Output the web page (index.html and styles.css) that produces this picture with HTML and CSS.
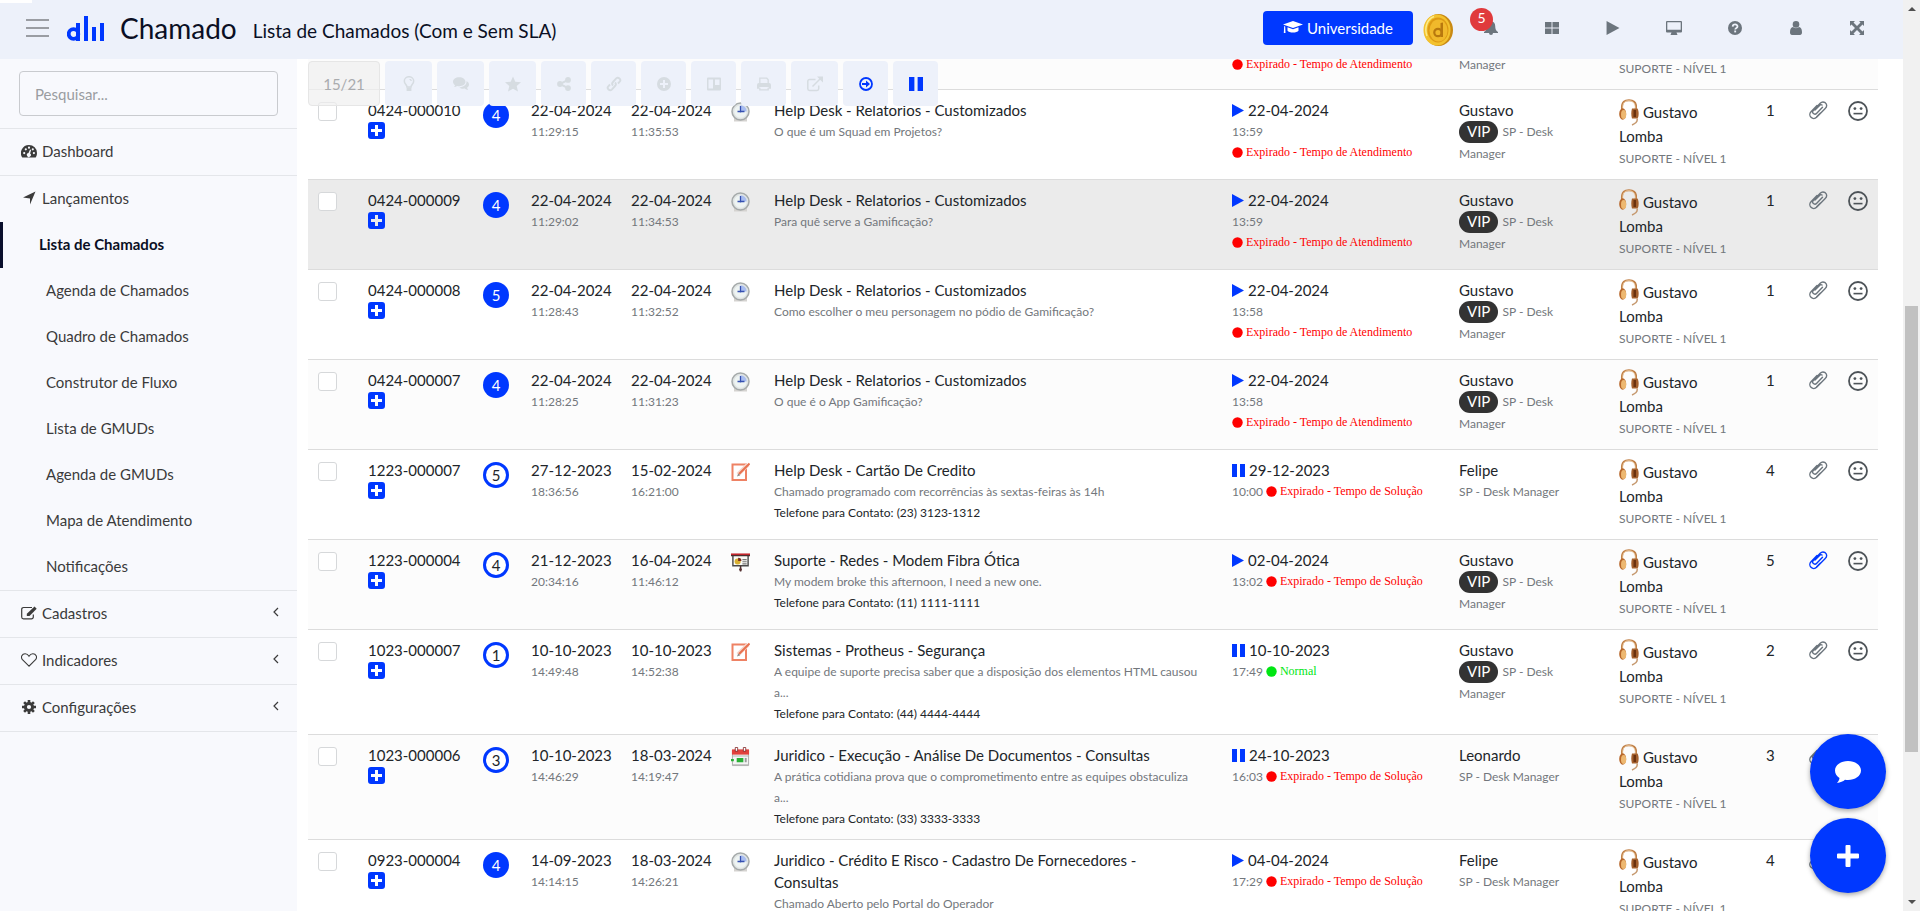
FILE: index.html
```html
<!DOCTYPE html>
<html lang="pt-BR">
<head>
<meta charset="utf-8">
<title>Chamado - Lista de Chamados</title>
<link rel="stylesheet" href="styles.css">
</head>
<body>
<svg class="sprite" aria-hidden="true">
  <symbol id="i-play" viewBox="0 0 12 13"><path d="M0 0L12 6.5L0 13Z"/></symbol>
  <symbol id="i-pause" viewBox="0 0 13 13"><path d="M0 0h5v13H0zM8 0h5v13H8z"/></symbol>
  <symbol id="i-dot" viewBox="0 0 11 11"><circle cx="5.5" cy="5.5" r="5.2"/></symbol>
  <symbol id="i-plus-square" viewBox="0 0 17 17"><path fill-rule="evenodd" d="M3 0h11a3 3 0 0 1 3 3v11a3 3 0 0 1-3 3H3a3 3 0 0 1-3-3V3a3 3 0 0 1 3-3zM7 3v4H3v3h4v4h3v-4h4V7h-4V3z"/></symbol>
  <symbol id="i-clip" viewBox="0 0 20 20"><path fill="none" stroke="currentColor" stroke-width="1.4" stroke-linecap="round" d="M9 5.500L3 11.700a3.900 3.900 0 0 0 5.600 5.600L17.200 8.500a3.600 3.600 0 0 0 0-5.800a3.900 3.900 0 0 0-5 .6L5.300 10.400a2.200 2.200 0 0 0 3.200 3.100L14.500 7.200M12.200 13.200L8.700 16.800M14 5a1.500 1.500 0 0 0-2.200.2L7 10"/></symbol>
  <symbol id="i-face" viewBox="0 0 20 20"><circle cx="10" cy="10" r="9" fill="none" stroke="currentColor" stroke-width="1.800"/><circle cx="6.900" cy="7.600" r="1.400"/><circle cx="13.100" cy="7.600" r="1.400"/><path d="M5.500 11.800h9v1.600h-9z"/></symbol>
  <symbol id="i-clock" viewBox="0 0 19 20"><path fill="#d5d3d0" d="M3 16h13v3.500H3z"/><circle cx="9.500" cy="9.500" r="8.500" fill="#dfe3e3" stroke="#a5aaaa" stroke-width="1.500"/><circle cx="9.500" cy="9.500" r="6.300" fill="#eef4f3"/><path fill="#a8bdf0" d="M9.500 3.200a6.300 6.300 0 0 1 6.300 6.300H9.500z"/><path fill="none" stroke="#3550b0" stroke-width="1.300" d="M9.500 4v6.500M6.500 9.500h7"/></symbol>
  <symbol id="i-note" viewBox="0 0 19 19"><path fill="#fff" stroke="#ee8264" stroke-width="2" d="M1.500 2h13.500v15.500H1.500z"/><path stroke="#f7d5ca" stroke-width="4" d="M7 12L17 2"/><path stroke="#e8714f" stroke-width="2" d="M8 11.500L18.500 1"/><path fill="#888" d="M6 14l1.200-3 2 1.800z"/></symbol>
  <symbol id="i-board" viewBox="0 0 20 20"><path fill="#fafaf6" stroke="#4a4a4a" stroke-width="1.500" d="M2 3h16v11H2z"/><path fill="#c4262d" d="M0 1h20v2H0z"/><path fill="#4a3030" d="M0 2.500h20v1.500H0zM9.300 14h1.600v6H9.300z"/><circle cx="7" cy="9.500" r="3.200" fill="#d8b032"/><path fill="#7a2b22" d="M7.500 9V5.500A3.500 3.500 0 0 1 11 9z"/><path stroke="#777" stroke-width="1.200" d="M12 7.500h4.500M12 9.700h4.500M12 12h4.500"/><circle cx="10" cy="18" r="1.500" fill="#5a3030"/></symbol>
  <symbol id="i-calendar" viewBox="0 0 20 20"><path fill="#f4f4f4" stroke="#aaa" d="M1.500 3h17v16h-17z"/><path fill="#e2403c" d="M1 2h18v5.500H1z"/><path fill="#b8b8b8" d="M2 8.500h16v1H2zM2 17.500h16v1.500H2z"/><path fill="#fff" stroke="#7a1a1a" stroke-width=".8" d="M4.500 0h2.500v4H4.500zM13 0h2.500v4H13z"/><path fill="#29b035" d="M6 11h7v4.500H6zM0 12h3v2.500H0z"/><path fill="#9a9a9a" d="M14.500 11h2v4.500h-2z"/></symbol>
  <symbol id="i-headset" viewBox="0 0 20 27"><path fill="none" stroke="#c08048" stroke-width="2" d="M3.300 12C1.500 1.500 7 1.300 10 1.300S18.500 2 16.700 11"/><path fill="none" stroke="#f0cfa6" stroke-width=".8" d="M3.800 10C3 2 8 1.600 10 1.600S16.800 3 16.200 10"/><ellipse cx="3.700" cy="15" rx="3.500" ry="5.800" fill="#b8672a"/><ellipse cx="4.600" cy="15.500" rx="2.600" ry="4.600" fill="#edb871"/><path fill="#a4602d" d="M13 9.500h5.500c1.500 2 1.500 8 0 10H13c-1-3-1-7 0-10z"/><path fill="#6a3210" d="M14.500 11h2.500v7h-2.500z"/><path fill="none" stroke="#c69a70" stroke-width="1.500" d="M18 19.500c1 3-1.500 5-5 6.500"/></symbol>
  <symbol id="i-chevron" viewBox="0 0 6 10"><path fill="none" stroke="currentColor" stroke-width="1.200" d="M5 1L1 5l4 4"/></symbol>
  <symbol id="i-bulb" viewBox="0 0 12 16"><path fill="none" stroke="currentColor" stroke-width="1.500" d="M4 11c0-2-2.700-3.200-2.700-6a4.700 4.300 0 0 1 9.400 0c0 2.800-2.700 4-2.700 6z"/><path d="M3.600 11.500h4.800V15H3.600zM6 3h2l1 2H7.800z"/></symbol>
  <symbol id="i-comments" viewBox="0 0 18 15"><path d="M7 0c4 0 7 2.200 7 5s-3 5-7 5c-.8 0-1.500 0-2.200-.3C3.700 10.500 2.300 11 1 11c.7-.7 1.200-1.400 1.300-2.200C.8 7.800 0 6.500 0 5c0-2.800 3-5 7-5z"/><path d="M15.200 4.500C17 5.300 18 6.600 18 8c0 1.400-.8 2.700-2.200 3.600.1.900.6 1.600 1.300 2.400-1.500 0-3-.6-4-1.400-2.300.4-4.600-.1-6-1.300 4.700-.1 8.500-2.700 8.100-6.800z"/></symbol>
  <symbol id="i-star" viewBox="0 0 16 15"><path d="M8 0l2.300 5.200 5.700.6-4.300 3.800 1.300 5.400L8 12.200 3 15l1.300-5.400L0 5.800l5.700-.6z"/></symbol>
  <symbol id="i-share" viewBox="0 0 14 14"><circle cx="11" cy="2.900" r="2.900"/><circle cx="11" cy="11.100" r="2.900"/><circle cx="3" cy="7" r="2.900"/><path fill="none" stroke="currentColor" stroke-width="2" d="M11 2.900L3 7l8 4.100"/></symbol>
  <symbol id="i-link" viewBox="0 0 16 16"><g fill="none" stroke="currentColor" stroke-width="1.900"><path d="M7 9.500c-1.500-1.500-1-2.500 0-3.500l3.200-3.600c2-2 5.500 1 3.500 3.300L12 7.500"/><path d="M9 6.500c1.500 1.500 1 2.500 0 3.500l-3.200 3.600c-2 2-5.500-1-3.500-3.300L4 8.500"/></g></symbol>
  <symbol id="i-plus-circle" viewBox="0 0 14 14"><path fill-rule="evenodd" d="M7 0a7 7 0 1 1 0 14A7 7 0 0 1 7 0zM6 3v3H3v2h3v3h2V8h3V6H8V3z"/></symbol>
  <symbol id="i-trello" viewBox="0 0 14 13"><path fill-rule="evenodd" d="M1 0h12a1 1 0 0 1 1 1v11a1 1 0 0 1-1 1H1a1 1 0 0 1-1-1V1a1 1 0 0 1 1-1zM1.500 2v9H6V2zM8 2v5.500h4.500V2z"/></symbol>
  <symbol id="i-print" viewBox="0 0 15 14"><path fill="none" stroke="currentColor" stroke-width="1.400" d="M3 7V.8h7.500L12 2.500V7M3 11v2.300h9V11"/><path d="M2 6h11a2 2 0 0 1 2 2v4h-2.500v-1.800h-10V12H0V8a2 2 0 0 1 2-2z"/></symbol>
  <symbol id="i-external" viewBox="0 0 16 15"><path fill="none" stroke="currentColor" stroke-width="1.500" d="M8.500 3H2.500A1.700 1.700 0 0 0 .8 4.700v7.600A1.700 1.700 0 0 0 2.500 14H10a1.700 1.700 0 0 0 1.700-1.700V9M5.500 10L14 1.500"/><path d="M10 0h6v6l-2.200-2L12 2z"/></symbol>
  <symbol id="i-arrow-circle" viewBox="0 0 14 14"><circle cx="7" cy="7" r="6" fill="none" stroke="currentColor" stroke-width="1.800"/><path d="M3 6h4V3.500L11 7l-4 3.500V8H3z"/></symbol>
  <symbol id="i-cap" viewBox="0 0 20 14"><path d="M10 0l10 3.500L10 7 0 3.500zM4.500 6.200L10 8.200l5.500-2v3.600c-1.500 2.400-9.500 2.400-11 0zM1.200 5l1 .4.300 6.600H.8z"/></symbol>
  <symbol id="i-bell" viewBox="0 0 14 14"><path d="M7 0c3 .6 4.200 2.500 4.200 5 0 3 .8 4.800 2.800 6v1H9a2 2 0 0 1-4 0H0v-1c2-1.200 2.800-3 2.800-6C2.800 2.500 4 .6 7 0z"/></symbol>
  <symbol id="i-grid" viewBox="0 0 15 13"><path d="M0 0h7v6H0zM8 0h7v6H8zM0 7h7v6H0zM8 7h7v6H8z"/></symbol>
  <symbol id="i-monitor" viewBox="0 0 16 14"><path fill-rule="evenodd" d="M1 0h14a1 1 0 0 1 1 1v9.500a1 1 0 0 1-1 1h-4.500L11.500 14h-7l1-2.500H1a1 1 0 0 1-1-1V1a1 1 0 0 1 1-1zM1.300 1.300v7.400h13.400V1.300z"/></symbol>
  <symbol id="i-help" viewBox="0 0 15 15"><circle cx="7.500" cy="7.500" r="7.500"/><path fill="none" stroke="#edf1fa" stroke-width="1.900" d="M5 6c.2-3 5.200-3 5.200-.2 0 1.700-2.500 1.500-2.500 3.400"/><path fill="#edf1fa" d="M6.700 10.200h2v2h-2z"/></symbol>
  <symbol id="i-user" viewBox="0 0 12 14"><circle cx="6" cy="3.400" r="3.300"/><path d="M2.800 6c2 1.500 4.400 1.500 6.400 0C11.500 6.500 12 9 12 11.500c0 1.600-.8 2.500-2 2.500H2c-1.200 0-2-.9-2-2.500C0 9 .5 6.500 2.800 6z"/></symbol>
  <symbol id="i-expand" viewBox="0 0 14 14"><path d="M0 0h5L3.500 1.500 7 5l3.500-3.500L9 0h5v5l-1.500-1.500L9 7l3.500 3.500L14 9v5H9l1.500-1.500L7 9l-3.500 3.500L5 14H0V9l1.500 1.500L5 7 1.500 3.500 0 5z"/></symbol>
  <symbol id="i-dashboard" viewBox="0 0 16 14"><path fill-rule="evenodd" d="M8 1a8 8 0 0 1 8 8c0 1.800-.5 3.200-1.300 4.500H1.300A8 8 0 0 1 8 1zM3.200 8a1.100 1.100 0 1 0 0 2.200 1.100 1.100 0 0 0 0-2.200zM4.800 4.200a1.100 1.100 0 1 0 0 2.200 1.100 1.100 0 0 0 0-2.200zM8 2.600a1.100 1.100 0 1 0 0 2.200 1.100 1.100 0 0 0 0-2.200zM11.800 4.200a1.100 1.100 0 1 0 0 2.200 1.100 1.100 0 0 0 0-2.200zM12.900 8a1.100 1.100 0 1 0 0 2.200 1.100 1.100 0 0 0 0-2.200zM9 5.500L7.500 9a2 2 0 1 0 1.600.4l1-3.500z"/></symbol>
  <symbol id="i-send" viewBox="0 0 14 14"><path d="M13.500.5L8 13.500V7.500L1 6.500z"/></symbol>
  <symbol id="i-edit" viewBox="0 0 16 14"><path fill="none" stroke="currentColor" stroke-width="1.200" d="M11 1.500H2.500A1.800 1.800 0 0 0 .7 3.300v7.700a1.800 1.800 0 0 0 1.800 1.800h8a1.800 1.800 0 0 0 1.800-1.800V8.500"/><path d="M13.500.5l2.200 2.200L8.500 10H5.800V7.700z"/></symbol>
  <symbol id="i-heart" viewBox="0 0 16 14"><path fill="none" stroke="currentColor" stroke-width="1.100" d="M8 13.200L1.700 7C-1 3.800 1.300.7 4.200.8 6 .9 7.200 2 8 3.200 8.800 2 10 .9 11.800.8c2.900-.1 5.200 3 2.500 6.200z"/></symbol>
  <symbol id="i-gear" viewBox="0 0 14 14"><circle cx="7" cy="7" r="3.600" fill="none" stroke="currentColor" stroke-width="3"/><path stroke="currentColor" stroke-width="2.600" d="M7 0v3M7 11v3M0 7h3M11 7h3M2.100 2.100l2 2M9.900 9.900l2 2M2.100 11.900l2-2M9.900 4.100l2-2"/></symbol>
  <symbol id="i-chat" viewBox="0 0 26 22"><path d="M13 0c7 0 13 4 13 9.500S20 19 13 19c-1 0-2 0-3-.2C8 20.500 5.500 21.500 2 22c1.500-1.500 2.400-3.200 2.500-5C1.700 15.200 0 12.500 0 9.500 0 4 6 0 13 0z"/></symbol>
</svg>

<div class="app">
  <header class="topbar">
    <span class="load-bar"></span>
    <button class="menu-toggle" type="button" aria-label="Menu"><span></span><span></span><span></span></button>
    <svg class="logo" viewBox="0 0 37 25" role="img" aria-label="Desk Manager"><circle cx="6.500" cy="18" r="4.800" fill="none" stroke="#0038ff" stroke-width="3.800"/><path fill="#0038ff" d="M9 7h4v18H9zM17 0h4v25h-4zM25 11h4v14h-4zM33 7h4v18h-4z"/></svg>
    <h1 class="product">Chamado</h1>
    <h2 class="page-title">Lista de Chamados (Com e Sem SLA)</h2>
    <div class="actions">
      <a class="university" href="#"><svg class="ic-cap"><use href="#i-cap"/></svg>Universidade</a>
      <svg class="coin" viewBox="0 0 30 32"><ellipse cx="15.500" cy="16" rx="14.500" ry="16" fill="#c98a14"/><ellipse cx="14" cy="16" rx="13.500" ry="15.500" fill="#f3c22e"/><ellipse cx="15" cy="16" rx="10.500" ry="12.500" fill="#dd9a14"/><ellipse cx="15.500" cy="16.500" rx="9" ry="11" fill="#f1b92b"/><circle cx="15" cy="18.500" r="3.700" fill="none" stroke="#b8780e" stroke-width="2.200"/><path fill="#b8780e" d="M17.500 9l2.500-.5V23h-2.500z"/><path fill="none" stroke="#fdeb8a" stroke-width="1.500" d="M4 22C1 14 4 5 11 2.500"/></svg>
      <nav class="icon-nav">
        <a href="#" aria-label="Notificações"><svg class="ic14"><use href="#i-bell"/></svg><span class="badge">5</span></a>
        <a href="#" aria-label="Painéis"><svg class="ic14"><use href="#i-grid"/></svg></a>
        <a href="#" aria-label="Iniciar"><svg class="ic14"><use href="#i-play"/></svg></a>
        <a href="#" aria-label="Monitor"><svg class="ic16"><use href="#i-monitor"/></svg></a>
        <a href="#" aria-label="Ajuda"><svg class="ic14"><use href="#i-help"/></svg></a>
        <a href="#" aria-label="Usuário"><svg class="ic14"><use href="#i-user"/></svg></a>
        <a href="#" aria-label="Tela cheia"><svg class="ic14"><use href="#i-expand"/></svg></a>
      </nav>
    </div>
  </header>

  <aside class="sidebar">
    <div class="search"><input type="search" placeholder="Pesquisar..." aria-label="Pesquisar"></div>
    <nav class="menu">
      <a class="item" href="#"><svg class="ic-menu"><use href="#i-dashboard"/></svg>Dashboard</a>
      <a class="item" href="#"><svg class="ic-menu"><use href="#i-send"/></svg>Lançamentos</a>
      <div class="submenu">
        <a class="active" href="#">Lista de Chamados</a>
        <a href="#">Agenda de Chamados</a>
        <a href="#">Quadro de Chamados</a>
        <a href="#">Construtor de Fluxo</a>
        <a href="#">Lista de GMUDs</a>
        <a href="#">Agenda de GMUDs</a>
        <a href="#">Mapa de Atendimento</a>
        <a href="#">Notificações</a>
      </div>
      <a class="item" href="#"><svg class="ic-menu"><use href="#i-edit"/></svg>Cadastros<svg class="chev"><use href="#i-chevron"/></svg></a>
      <a class="item" href="#"><svg class="ic-menu"><use href="#i-heart"/></svg>Indicadores<svg class="chev"><use href="#i-chevron"/></svg></a>
      <a class="item last" href="#"><svg class="ic-menu"><use href="#i-gear"/></svg>Configurações<svg class="chev"><use href="#i-chevron"/></svg></a>
    </nav>
  </aside>

  <main class="content">
    <div class="toolbar">
      <button class="counter" type="button" disabled>15/21</button>
      <button class="tool wide" type="button" disabled aria-label="Base de conhecimento"><svg class="ic16"><use href="#i-bulb"/></svg></button>
      <button class="tool wide" type="button" disabled aria-label="Interagir"><svg class="ic16"><use href="#i-comments"/></svg></button>
      <button class="tool wide" type="button" disabled aria-label="Favoritar"><svg class="ic16"><use href="#i-star"/></svg></button>
      <button class="tool" type="button" disabled aria-label="Compartilhar"><svg class="ic14"><use href="#i-share"/></svg></button>
      <button class="tool" type="button" disabled aria-label="Vincular"><svg class="ic16"><use href="#i-link"/></svg></button>
      <button class="tool" type="button" disabled aria-label="Adicionar"><svg class="ic14"><use href="#i-plus-circle"/></svg></button>
      <button class="tool" type="button" disabled aria-label="Quadro"><svg class="ic14"><use href="#i-trello"/></svg></button>
      <button class="tool" type="button" disabled aria-label="Imprimir"><svg class="ic14"><use href="#i-print"/></svg></button>
      <button class="tool wide" type="button" disabled aria-label="Abrir"><svg class="ic16"><use href="#i-external"/></svg></button>
      <button class="tool on" type="button" aria-label="Avançar"><svg class="ic14"><use href="#i-arrow-circle"/></svg></button>
      <button class="tool on" type="button" aria-label="Pausar"><svg class="ic14"><use href="#i-pause"/></svg></button>
    </div>

    <table class="tickets">
      <colgroup><col class="c-check"><col class="c-num"><col class="c-prio"><col class="c-date"><col class="c-date"><col class="c-type"><col><col class="c-sla"><col class="c-person"><col class="c-oper"><col class="c-count"><col class="c-icon"><col class="c-icon"></colgroup>
      <tbody>
        <tr class="tail">
          <td></td><td></td><td></td><td></td><td></td><td></td><td></td>
          <td><div class="small"><span class="sla late"><svg class="dot"><use href="#i-dot"/></svg>Expirado - Tempo de Atendimento</span></div></td>
          <td><div class="small">Manager</div></td>
          <td><div class="small">SUPORTE - NÍVEL 1</div></td>
          <td></td><td></td><td></td>
        </tr>
        <tr>
          <td><input class="check" type="checkbox" aria-label="Selecionar 0424-000010"></td>
          <td><div class="main">0424-000010</div><svg class="plus"><use href="#i-plus-square"/></svg></td>
          <td><span class="prio">4</span></td>
          <td><div class="main">22-04-2024</div><div class="small">11:29:15</div></td>
          <td><div class="main">22-04-2024</div><div class="small">11:35:53</div></td>
          <td><svg class="type"><use href="#i-clock"/></svg></td>
          <td><div class="main">Help Desk - Relatorios - Customizados</div><div class="small">O que é um Squad em Projetos?</div></td>
          <td><div class="main"><svg class="ic-play"><use href="#i-play"/></svg>22-04-2024</div><div class="small">13:59 <span class="sla late"><svg class="dot"><use href="#i-dot"/></svg>Expirado - Tempo de Atendimento</span></div></td>
          <td><div class="main">Gustavo</div><div class="org"><span class="vip">VIP</span> SP - Desk Manager</div></td>
          <td><div class="oper"><svg class="headset"><use href="#i-headset"/></svg>Gustavo</div><div class="oper2">Lomba</div><div class="small">SUPORTE - NÍVEL 1</div></td>
          <td><div class="main">1</div></td>
          <td><svg class="clip"><use href="#i-clip"/></svg></td>
          <td><svg class="face"><use href="#i-face"/></svg></td>
        </tr>
        <tr class="hover">
          <td><input class="check" type="checkbox" aria-label="Selecionar 0424-000009"></td>
          <td><div class="main">0424-000009</div><svg class="plus"><use href="#i-plus-square"/></svg></td>
          <td><span class="prio">4</span></td>
          <td><div class="main">22-04-2024</div><div class="small">11:29:02</div></td>
          <td><div class="main">22-04-2024</div><div class="small">11:34:53</div></td>
          <td><svg class="type"><use href="#i-clock"/></svg></td>
          <td><div class="main">Help Desk - Relatorios - Customizados</div><div class="small">Para quê serve a Gamificação?</div></td>
          <td><div class="main"><svg class="ic-play"><use href="#i-play"/></svg>22-04-2024</div><div class="small">13:59 <span class="sla late"><svg class="dot"><use href="#i-dot"/></svg>Expirado - Tempo de Atendimento</span></div></td>
          <td><div class="main">Gustavo</div><div class="org"><span class="vip">VIP</span> SP - Desk Manager</div></td>
          <td><div class="oper"><svg class="headset"><use href="#i-headset"/></svg>Gustavo</div><div class="oper2">Lomba</div><div class="small">SUPORTE - NÍVEL 1</div></td>
          <td><div class="main">1</div></td>
          <td><svg class="clip"><use href="#i-clip"/></svg></td>
          <td><svg class="face"><use href="#i-face"/></svg></td>
        </tr>
        <tr>
          <td><input class="check" type="checkbox" aria-label="Selecionar 0424-000008"></td>
          <td><div class="main">0424-000008</div><svg class="plus"><use href="#i-plus-square"/></svg></td>
          <td><span class="prio">5</span></td>
          <td><div class="main">22-04-2024</div><div class="small">11:28:43</div></td>
          <td><div class="main">22-04-2024</div><div class="small">11:32:52</div></td>
          <td><svg class="type"><use href="#i-clock"/></svg></td>
          <td><div class="main">Help Desk - Relatorios - Customizados</div><div class="small">Como escolher o meu personagem no pódio de Gamificação?</div></td>
          <td><div class="main"><svg class="ic-play"><use href="#i-play"/></svg>22-04-2024</div><div class="small">13:58 <span class="sla late"><svg class="dot"><use href="#i-dot"/></svg>Expirado - Tempo de Atendimento</span></div></td>
          <td><div class="main">Gustavo</div><div class="org"><span class="vip">VIP</span> SP - Desk Manager</div></td>
          <td><div class="oper"><svg class="headset"><use href="#i-headset"/></svg>Gustavo</div><div class="oper2">Lomba</div><div class="small">SUPORTE - NÍVEL 1</div></td>
          <td><div class="main">1</div></td>
          <td><svg class="clip"><use href="#i-clip"/></svg></td>
          <td><svg class="face"><use href="#i-face"/></svg></td>
        </tr>
        <tr>
          <td><input class="check" type="checkbox" aria-label="Selecionar 0424-000007"></td>
          <td><div class="main">0424-000007</div><svg class="plus"><use href="#i-plus-square"/></svg></td>
          <td><span class="prio">4</span></td>
          <td><div class="main">22-04-2024</div><div class="small">11:28:25</div></td>
          <td><div class="main">22-04-2024</div><div class="small">11:31:23</div></td>
          <td><svg class="type"><use href="#i-clock"/></svg></td>
          <td><div class="main">Help Desk - Relatorios - Customizados</div><div class="small">O que é o App Gamificação?</div></td>
          <td><div class="main"><svg class="ic-play"><use href="#i-play"/></svg>22-04-2024</div><div class="small">13:58 <span class="sla late"><svg class="dot"><use href="#i-dot"/></svg>Expirado - Tempo de Atendimento</span></div></td>
          <td><div class="main">Gustavo</div><div class="org"><span class="vip">VIP</span> SP - Desk Manager</div></td>
          <td><div class="oper"><svg class="headset"><use href="#i-headset"/></svg>Gustavo</div><div class="oper2">Lomba</div><div class="small">SUPORTE - NÍVEL 1</div></td>
          <td><div class="main">1</div></td>
          <td><svg class="clip"><use href="#i-clip"/></svg></td>
          <td><svg class="face"><use href="#i-face"/></svg></td>
        </tr>
        <tr>
          <td><input class="check" type="checkbox" aria-label="Selecionar 1223-000007"></td>
          <td><div class="main">1223-000007</div><svg class="plus"><use href="#i-plus-square"/></svg></td>
          <td><span class="prio ring">5</span></td>
          <td><div class="main">27-12-2023</div><div class="small">18:36:56</div></td>
          <td><div class="main">15-02-2024</div><div class="small">16:21:00</div></td>
          <td><svg class="type"><use href="#i-note"/></svg></td>
          <td><div class="main">Help Desk - Cartão De Credito</div><div class="small">Chamado programado com recorrências às sextas-feiras às 14h</div><div class="small dark">Telefone para Contato: (23) 3123-1312</div></td>
          <td><div class="main"><svg class="ic-pause"><use href="#i-pause"/></svg>29-12-2023</div><div class="small">10:00 <span class="sla late"><svg class="dot"><use href="#i-dot"/></svg>Expirado - Tempo de Solução</span></div></td>
          <td><div class="main">Felipe</div><div class="small">SP - Desk Manager</div></td>
          <td><div class="oper"><svg class="headset"><use href="#i-headset"/></svg>Gustavo</div><div class="oper2">Lomba</div><div class="small">SUPORTE - NÍVEL 1</div></td>
          <td><div class="main">4</div></td>
          <td><svg class="clip"><use href="#i-clip"/></svg></td>
          <td><svg class="face"><use href="#i-face"/></svg></td>
        </tr>
        <tr>
          <td><input class="check" type="checkbox" aria-label="Selecionar 1223-000004"></td>
          <td><div class="main">1223-000004</div><svg class="plus"><use href="#i-plus-square"/></svg></td>
          <td><span class="prio ring">4</span></td>
          <td><div class="main">21-12-2023</div><div class="small">20:34:16</div></td>
          <td><div class="main">16-04-2024</div><div class="small">11:46:12</div></td>
          <td><svg class="type"><use href="#i-board"/></svg></td>
          <td><div class="main">Suporte - Redes - Modem Fibra Ótica</div><div class="small">My modem broke this afternoon, I need a new one.</div><div class="small dark">Telefone para Contato: (11) 1111-1111</div></td>
          <td><div class="main"><svg class="ic-play"><use href="#i-play"/></svg>02-04-2024</div><div class="small">13:02 <span class="sla late"><svg class="dot"><use href="#i-dot"/></svg>Expirado - Tempo de Solução</span></div></td>
          <td><div class="main">Gustavo</div><div class="org"><span class="vip">VIP</span> SP - Desk Manager</div></td>
          <td><div class="oper"><svg class="headset"><use href="#i-headset"/></svg>Gustavo</div><div class="oper2">Lomba</div><div class="small">SUPORTE - NÍVEL 1</div></td>
          <td><div class="main">5</div></td>
          <td><svg class="clip has-file"><use href="#i-clip"/></svg></td>
          <td><svg class="face"><use href="#i-face"/></svg></td>
        </tr>
        <tr>
          <td><input class="check" type="checkbox" aria-label="Selecionar 1023-000007"></td>
          <td><div class="main">1023-000007</div><svg class="plus"><use href="#i-plus-square"/></svg></td>
          <td><span class="prio ring">1</span></td>
          <td><div class="main">10-10-2023</div><div class="small">14:49:48</div></td>
          <td><div class="main">10-10-2023</div><div class="small">14:52:38</div></td>
          <td><svg class="type"><use href="#i-note"/></svg></td>
          <td><div class="main">Sistemas - Protheus - Segurança</div><div class="small">A equipe de suporte precisa saber que a disposição dos elementos HTML causou<br>a...</div><div class="small dark">Telefone para Contato: (44) 4444-4444</div></td>
          <td><div class="main"><svg class="ic-pause"><use href="#i-pause"/></svg>10-10-2023</div><div class="small">17:49 <span class="sla ok"><svg class="dot"><use href="#i-dot"/></svg>Normal</span></div></td>
          <td><div class="main">Gustavo</div><div class="org"><span class="vip">VIP</span> SP - Desk Manager</div></td>
          <td><div class="oper"><svg class="headset"><use href="#i-headset"/></svg>Gustavo</div><div class="oper2">Lomba</div><div class="small">SUPORTE - NÍVEL 1</div></td>
          <td><div class="main">2</div></td>
          <td><svg class="clip"><use href="#i-clip"/></svg></td>
          <td><svg class="face"><use href="#i-face"/></svg></td>
        </tr>
        <tr>
          <td><input class="check" type="checkbox" aria-label="Selecionar 1023-000006"></td>
          <td><div class="main">1023-000006</div><svg class="plus"><use href="#i-plus-square"/></svg></td>
          <td><span class="prio ring">3</span></td>
          <td><div class="main">10-10-2023</div><div class="small">14:46:29</div></td>
          <td><div class="main">18-03-2024</div><div class="small">14:19:47</div></td>
          <td><svg class="type"><use href="#i-calendar"/></svg></td>
          <td><div class="main">Juridico - Execução - Análise De Documentos - Consultas</div><div class="small">A prática cotidiana prova que o comprometimento entre as equipes obstaculiza<br>a...</div><div class="small dark">Telefone para Contato: (33) 3333-3333</div></td>
          <td><div class="main"><svg class="ic-pause"><use href="#i-pause"/></svg>24-10-2023</div><div class="small">16:03 <span class="sla late"><svg class="dot"><use href="#i-dot"/></svg>Expirado - Tempo de Solução</span></div></td>
          <td><div class="main">Leonardo</div><div class="small">SP - Desk Manager</div></td>
          <td><div class="oper"><svg class="headset"><use href="#i-headset"/></svg>Gustavo</div><div class="oper2">Lomba</div><div class="small">SUPORTE - NÍVEL 1</div></td>
          <td><div class="main">3</div></td>
          <td><svg class="clip"><use href="#i-clip"/></svg></td>
          <td></td>
        </tr>
        <tr>
          <td><input class="check" type="checkbox" aria-label="Selecionar 0923-000004"></td>
          <td><div class="main">0923-000004</div><svg class="plus"><use href="#i-plus-square"/></svg></td>
          <td><span class="prio">4</span></td>
          <td><div class="main">14-09-2023</div><div class="small">14:14:15</div></td>
          <td><div class="main">18-03-2024</div><div class="small">14:26:21</div></td>
          <td><svg class="type"><use href="#i-clock"/></svg></td>
          <td><div class="main">Juridico - Crédito E Risco - Cadastro De Fornecedores -<br>Consultas</div><div class="small">Chamado Aberto pelo Portal do Operador</div></td>
          <td><div class="main"><svg class="ic-play"><use href="#i-play"/></svg>04-04-2024</div><div class="small">17:29 <span class="sla late"><svg class="dot"><use href="#i-dot"/></svg>Expirado - Tempo de Solução</span></div></td>
          <td><div class="main">Felipe</div><div class="small">SP - Desk Manager</div></td>
          <td><div class="oper"><svg class="headset"><use href="#i-headset"/></svg>Gustavo</div><div class="oper2">Lomba</div><div class="small">SUPORTE - NÍVEL 1</div></td>
          <td><div class="main">4</div></td>
          <td><svg class="clip"><use href="#i-clip"/></svg></td>
          <td></td>
        </tr>
      </tbody>
    </table>
  </main>

  <div class="scrollbar" aria-hidden="true"><span class="arrow up"></span><span class="track"><span class="thumb"></span></span><span class="arrow down"></span></div>
</div>

<div class="fabs">
  <button type="button" aria-label="Chat"><svg class="ic-chat"><use href="#i-chat"/></svg></button>
  <button type="button" aria-label="Novo chamado"><svg class="ic-add" viewBox="0 0 22 22"><path d="M8.500 1a1 1 0 0 1 1-1h3a1 1 0 0 1 1 1v7.500H21a1 1 0 0 1 1 1v3a1 1 0 0 1-1 1h-7.500V21a1 1 0 0 1-1 1h-3a1 1 0 0 1-1-1v-7.500H1a1 1 0 0 1-1-1v-3a1 1 0 0 1 1-1h7.500z"/></svg></button>
</div>
</body>
</html>
```

FILE: styles.css
```css
* { box-sizing: border-box; }

body {
  margin: 0;
  font-family: "Lato", "Open Sans", sans-serif;
  font-size: 15px;
  color: #212529;
  background: #fff;
  overflow: hidden;
}

a { color: inherit; text-decoration: none; }
svg { fill: currentColor; }
button { font: inherit; cursor: pointer; }

.sprite { display: none; }
.ic14 { width: 14px; height: 14px; }
.ic16 { width: 16px; height: 16px; }

.app {
  display: grid;
  grid-template-columns: 297px 1fr 17px;
  grid-template-rows: 59px 1fr;
  height: 100vh;
}

/* top bar */
.topbar {
  grid-column: 1 / 3;
  position: relative;
  display: flex;
  align-items: center;
  padding: 0 16px 3px 26px;
  background: #edf1fa;
  z-index: 2;
}

.load-bar {
  position: absolute;
  left: 0;
  top: 0;
  width: 32px;
  height: 3px;
  background: #fff;
}

.menu-toggle {
  display: flex;
  flex-direction: column;
  gap: 6px;
  width: 23px;
  padding: 0;
  border: 0;
  background: none;
}
.menu-toggle span { height: 2px; background: #9a9da3; }

.logo { width: 37px; height: 25px; margin-left: 18px; }

.product,
.page-title { margin: 0; font-weight: 400; color: #0a0f24; line-height: 32px; }
.product { margin-left: 16px; font-size: 28px; }
.page-title { margin-left: 16px; padding-top: 5px; font-size: 19px; }

.actions { display: flex; align-items: center; margin-left: auto; }

.university {
  display: flex;
  align-items: center;
  justify-content: center;
  gap: 4px;
  width: 150px;
  height: 34px;
  border-radius: 4px;
  background: #0038ff;
  color: #fff;
  font-size: 15px;
}
.ic-cap { width: 20px; height: 14px; }
.coin { width: 30px; height: 32px; margin: 4px 7px 0 10px; }

.icon-nav { display: flex; color: #6c757d; }
.icon-nav a {
  position: relative;
  display: flex;
  align-items: center;
  justify-content: center;
  width: 61px;
  height: 34px;
}
.badge {
  position: absolute;
  left: 10px;
  top: -3px;
  width: 23px;
  height: 23px;
  border-radius: 50%;
  background: #e03a3c;
  color: #fff;
  font-size: 14px;
  line-height: 20px;
  text-align: center;
}

/* sidebar */
.sidebar { background: #f8f9fd; overflow: hidden; color: #3b3b3b; }

.search { padding: 12px 19px; }
.search input {
  display: block;
  width: 100%;
  height: 45px;
  padding: 0 15px;
  border: 1px solid #c9cbcf;
  border-radius: 4px;
  background: transparent;
  font: inherit;
}
.search input::placeholder { color: #9a9da1; }

.item {
  display: flex;
  align-items: center;
  gap: 5px;
  height: 47px;
  padding: 0 18px 2px 21px;
  border-top: 1px solid #e4e6ea;
}
.item.last { height: 48px; border-bottom: 1px solid #e4e6ea; }
.item + .item:nth-child(2) { border-top-color: #e4e6ea; }
.ic-menu { width: 16px; height: 14px; }
.chev { width: 6px; height: 10px; margin: 0 0 3px auto; }

.submenu a {
  display: flex;
  align-items: center;
  height: 46px;
  padding: 0 0 2px 46px;
}
.submenu .active {
  padding-left: 36px;
  border-left: 3px solid #0a0f2c;
  color: #0a0f24;
  font-weight: 700;
}

/* ticket list */
.content {
  position: relative;
  overflow: hidden;
  padding: 0 25px 0 11px;
}

.toolbar {
  position: absolute;
  top: 2px;
  left: 11px;
  display: flex;
  gap: 5px;
  z-index: 1;
}
.toolbar button {
  display: flex;
  align-items: center;
  justify-content: center;
  height: 45px;
  padding: 0;
  border: 0;
  border-radius: 4px;
}
.toolbar .counter {
  width: 72px;
  border: 1px solid #e6e6e6;
  background: rgba(240, 240, 240, .7);
  color: #a9abae;
}
.tool { width: 45px; background: #edf1fa; color: #d6dce1; }
.tool.wide { width: 47px; }
.tool.on { color: #0038ff; }

/* the list sits scrolled part-way under the top bar */
.tickets {
  width: 100%;
  margin-top: -60px;
  table-layout: fixed;
  border-spacing: 0;
}
.c-check { width: 50px; }
.c-num { width: 115px; }
.c-prio { width: 48px; }
.c-date { width: 100px; }
.c-type { width: 43px; }
.c-sla { width: 227px; }
.c-person { width: 160px; }
.c-oper { width: 147px; }
.c-count { width: 42px; }
.c-icon { width: 40px; }

.tickets td {
  height: 90px;
  padding: 9px 10px 10px;
  border-top: 1px solid #dcdcdc;
  vertical-align: top;
}
.tickets tr:nth-child(odd) { background: #fcfcfc; }
.tickets tr.hover { background: #ebebeb; }
.tickets .tail td { padding-bottom: 14px; vertical-align: bottom; }
.tickets .tail td:nth-child(10) { padding-bottom: 10px; }
.tickets td:nth-child(4),
.tickets td:nth-child(5) { white-space: nowrap; }

.main { line-height: 22px; }
.small { font-size: 12px; line-height: 21px; color: #73777c; }
.small.dark { color: #212529; }

.check {
  appearance: none;
  display: block;
  width: 19px;
  height: 19px;
  margin: 3px 0 0;
  border: 1px solid #d6d8da;
  border-radius: 3px;
  background: #fff;
}
.plus { display: block; width: 17px; height: 17px; margin-top: 1px; color: #0038ff; }

.prio {
  display: block;
  width: 26px;
  height: 26px;
  margin-top: 3px;
  border-radius: 50%;
  background: #0038ff;
  color: #fff;
  line-height: 26px;
  text-align: center;
}
.prio.ring {
  border: 3px solid #0038ff;
  background: #fff;
  color: #212529;
  line-height: 20px;
}
.type { display: block; width: 19px; height: 20px; margin-top: 3px; }

.ic-play { width: 12px; height: 13px; margin-right: 4px; vertical-align: -1px; color: #0038ff; }
.ic-pause { width: 13px; height: 13px; margin-right: 4px; vertical-align: -1px; color: #0038ff; }

.sla {
  display: inline-block;
  font-family: "Liberation Serif", serif;
  vertical-align: top;
}
.late { color: #f00; }
.ok { color: #00e613; }
.dot { width: 11px; height: 11px; margin-right: 3px; vertical-align: -2px; }

.org { font-size: 12px; line-height: 22px; color: #73777c; }
.vip {
  display: inline-block;
  height: 22px;
  margin-right: 1px;
  padding: 0 8px;
  border-radius: 11px;
  background: #333;
  color: #fff;
  font-size: 15px;
  line-height: 21px;
  vertical-align: top;
}

.oper { display: flex; align-items: center; gap: 4px; height: 26px; }
.oper2 { line-height: 23px; }
.headset { width: 20px; height: 27px; }
.clip { display: block; width: 20px; height: 20px; margin-top: 1px; color: #6c757d; }
.clip.has-file { color: #0038ff; }
.face { display: block; width: 20px; height: 20px; margin-top: 2px; color: #4d5358; }

/* scroll bar */
.scrollbar {
  grid-column: 3;
  grid-row: 1 / 3;
  display: flex;
  flex-direction: column;
  align-items: center;
  justify-content: space-between;
  padding: 7px 0;
  background: #f1f1f1;
}
.arrow { border: 4px solid transparent; border-top-width: 0; border-bottom: 4px solid #505050; }
.arrow.down { border-top: 4px solid #505050; border-bottom-width: 0; }
.track { display: flex; flex-direction: column; flex: 1; padding-top: 295px; }
.thumb { width: 13px; height: 49vh; background: #c1c1c1; }

/* floating buttons */
.fabs {
  position: fixed;
  right: 34px;
  bottom: 18px;
  display: flex;
  flex-direction: column;
  gap: 9px;
  z-index: 3;
}
.fabs button {
  display: flex;
  align-items: center;
  justify-content: center;
  width: 76px;
  height: 75px;
  border: 0;
  border-radius: 50%;
  background: #0038ff;
  color: #fff;
  box-shadow: 0 2px 5px rgba(0, 0, 0, .35);
}
.ic-chat { width: 26px; height: 22px; }
.ic-add { width: 22px; height: 22px; }
```
